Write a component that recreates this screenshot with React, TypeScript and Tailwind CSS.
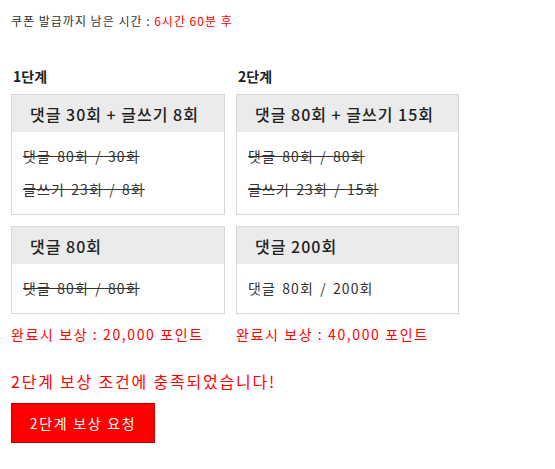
import React from "react";

const font = "font-['Noto_Sans_CJK_KR','Noto_Sans',sans-serif]";

function Card({ title, lines, done }: { title: string; lines: string[]; done: boolean }) {
  return (
    <div className="border border-[#d6d6d6] bg-white">
      <div className="h-[37px] bg-[#ebebeb] flex items-center px-[18px] text-[16px] text-[#222] font-medium whitespace-nowrap tracking-[1px]">
        {title}
      </div>
      <div className="py-[8px] px-[11px]">
        {lines.map((l) => (
          <div
            key={l}
            className={`leading-[33px] text-[14px] text-[#333] whitespace-nowrap tracking-[1.1px] [word-spacing:2px] ${done ? "line-through" : ""}`}
          >
            {l}
          </div>
        ))}
      </div>
    </div>
  );
}

function Column({
  label,
  width,
  cards,
  reward,
}: {
  label: string;
  width: string;
  cards: { title: string; lines: string[]; done: boolean }[];
  reward: string;
}) {
  return (
    <div className={width}>
      <div className="text-[14px] leading-[20px] font-bold text-[#222] pl-[2px] mb-[8px]">{label}</div>
      <div className="flex flex-col gap-[11px]">
        {cards.map((c) => (
          <Card key={c.title} {...c} />
        ))}
      </div>
      <div className="mt-[10px] text-[14px] leading-[20px] text-[#ff0000] whitespace-nowrap tracking-[1.6px]">{reward}</div>
    </div>
  );
}

export default function App() {
  return (
    <div className={`${font} bg-white w-[555px] h-[469px] px-[11px] pt-[13px]`}>
      <div className="text-[12px] leading-[16px] text-[#333] tracking-[1px] whitespace-nowrap">
        쿠폰 발급까지 남은 시간 : <span className="text-[#ff0000]">6시간 60분 후</span>
      </div>
      <div className="flex gap-[11px] mt-[37px]">
        <Column
          label="1단계"
          width="w-[214px]"
          cards={[
            { title: "댓글 30회 + 글쓰기 8회", lines: ["댓글 80회 / 30회", "글쓰기 23회 / 8회"], done: true },
            { title: "댓글 80회", lines: ["댓글 80회 / 80회"], done: true },
          ]}
          reward="완료시 보상 : 20,000 포인트"
        />
        <Column
          label="2단계"
          width="w-[223px]"
          cards={[
            { title: "댓글 80회 + 글쓰기 15회", lines: ["댓글 80회 / 80회", "글쓰기 23회 / 15회"], done: true },
            { title: "댓글 200회", lines: ["댓글 80회 / 200회"], done: false },
          ]}
          reward="완료시 보상 : 40,000 포인트"
        />
      </div>
      <div className="mt-[26px] text-[16px] leading-[22px] text-[#ff0000] tracking-[1.8px] whitespace-nowrap">
        2단계 보상 조건에 충족되었습니다!
      </div>
      <button className="mt-[11px] w-[144px] h-[40px] bg-[#ff0000] border border-[#c00000] text-white text-[14px] tracking-[1.7px] flex items-center justify-center">
        2단계 보상 요청
      </button>
    </div>
  );
}
